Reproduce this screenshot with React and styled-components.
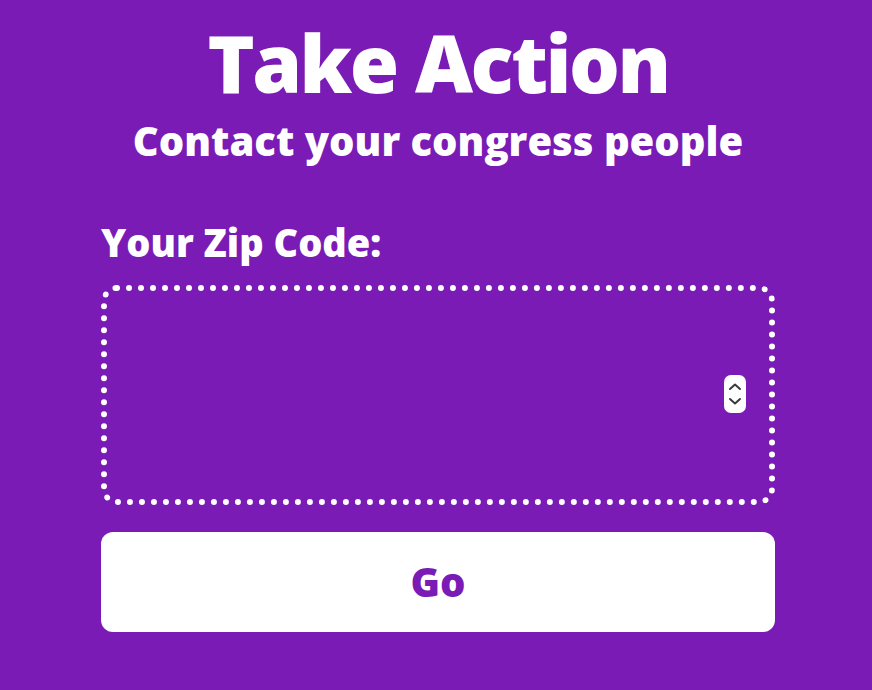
import React from 'react'
import styled, { createGlobalStyle } from 'styled-components'

const GlobalStyle = createGlobalStyle`
    body{
        margin: 0;
        background: #791bb4;
        font-family: "Open Sans", "Lato", sans-serif;
    }
`

const Page = styled.div`
    width: 674px;
    margin-left: 101px;
    padding-top: 22px;
    color: #fff;
`

const Title = styled.h1`
    margin: 0;
    text-align: center;
    font-size: 80px;
    font-weight: 800;
    line-height: 1;
    letter-spacing: -2.5px;
`

const Subtitle = styled.h2`
    margin: 17px 0 0;
    text-align: center;
    font-size: 40px;
    font-weight: 800;
    line-height: 1.1;
`

const Form = styled.form`
    display: flex;
    flex-direction: column;
    margin-top: 57px;
`

const Label = styled.label`
    font-size: 38px;
    font-weight: 800;
    line-height: 1.2;
`

const Field = styled.div`
    position: relative;
    margin-top: 19px;
`

const ZipInput = styled.input`
    box-sizing: border-box;
    width: 100%;
    height: 220px;
    border: 6px dotted #fff;
    border-radius: 16px;
    background: transparent;
    color: #fff;
    font-size: 36px;
    padding: 0 24px;
    outline: none;
    -moz-appearance: textfield;
    &::-webkit-inner-spin-button,
    &::-webkit-outer-spin-button{
        -webkit-appearance: none;
        margin: 0;
    }
`

const Spinner = styled.div`
    position: absolute;
    right: 29px;
    top: 90px;
    width: 22px;
    height: 38px;
    background: #fff;
    border-radius: 7px;
    display: flex;
    align-items: center;
    justify-content: center;
`

const GoButton = styled.button`
    margin-top: 27px;
    height: 100px;
    border: none;
    border-radius: 12px;
    background: #fff;
    color: #791bb4;
    font-family: inherit;
    font-size: 40px;
    font-weight: 800;
    cursor: pointer;
`

const App = () => {
    return(
        <>
            <GlobalStyle />
            <Page>
                <Title>Take Action</Title>
                <Subtitle>Contact your congress people</Subtitle>
                <Form onSubmit={e => e.preventDefault()}>
                    <Label htmlFor="zip">Your Zip Code:</Label>
                    <Field>
                        <ZipInput id="zip" type="number" name="zip" />
                        <Spinner>
                            <svg width="14" height="30" viewBox="0 0 14 30" fill="none" stroke="#3a3a3a" strokeWidth="2" strokeLinecap="round" strokeLinejoin="round">
                                <path d="M2 10 L7 5.5 L12 10" />
                                <path d="M2 20 L7 24.5 L12 20" />
                            </svg>
                        </Spinner>
                    </Field>
                    <GoButton type="submit">Go</GoButton>
                </Form>
            </Page>
        </>
    )
}

export default App
